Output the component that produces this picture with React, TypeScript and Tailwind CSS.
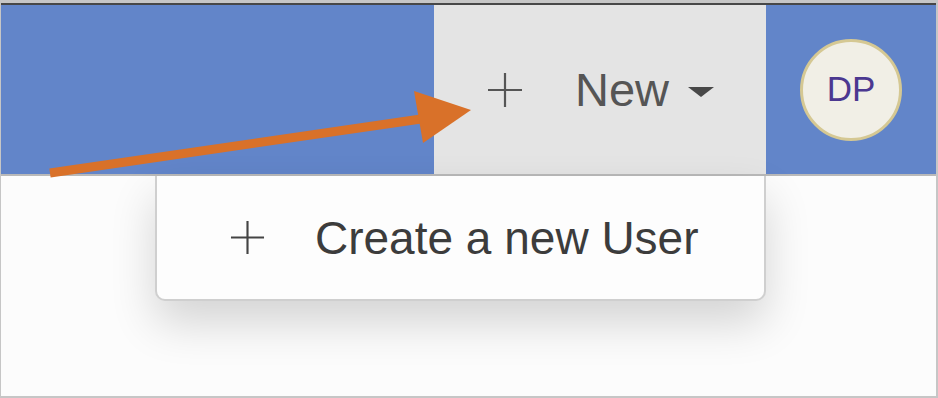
const PlusIcon = ({ size, className }: { size: number; className?: string }) => (
  <svg width={size} height={size} viewBox="0 0 36 36" className={className}>
    <line x1="18" y1="1" x2="18" y2="35" stroke="currentColor" strokeWidth="2.2" />
    <line x1="1" y1="18" x2="35" y2="18" stroke="currentColor" strokeWidth="2.2" />
  </svg>
);

const Pointer = () => (
  <svg
    width="938"
    height="398"
    viewBox="0 0 938 398"
    className="absolute left-0 top-0 pointer-events-none"
  >
    <line x1="49" y1="170" x2="420" y2="116" stroke="#d97129" strokeWidth="9" />
    <polygon points="413,88 470,107 422,140" fill="#d97129" />
  </svg>
);

export default function App() {
  return (
    <div
      className="relative w-[938px] h-[398px] overflow-hidden bg-[#fcfcfc] border-l border-r-2 border-b-2 border-t-[3px] border-[#c6c6c6]"
      style={{ fontFamily: '"Liberation Sans", Arial, sans-serif' }}
    >
      <div className="h-[2px] bg-[#474747]" />
      <header className="flex h-[171px] bg-[#6285c9] border-b-2 border-[#b9b9b9]">
        <div className="flex-1" />
        <button className="w-[332px] bg-[#e4e4e4] flex items-center pl-[53px] text-[#555555]">
          <PlusIcon size={36} />
          <span className="ml-[52px] text-[47px] leading-none">New</span>
          <svg width="28" height="12" viewBox="0 0 28 12" className="ml-[18px] mt-1 text-[#484848]">
            <polygon points="1,1 27,1 14,11" fill="currentColor" />
          </svg>
        </button>
        <div className="w-[170px] flex items-center justify-center">
          <div className="w-[102px] h-[102px] rounded-full bg-[#f1efe6] border-[3px] border-[#d5c893] flex items-center justify-center text-[35px] text-[#4b3890]">
            DP
          </div>
        </div>
      </header>

      <div className="absolute left-[154px] top-[173px] w-[611px] h-[125px] bg-[#fdfdfd] border-2 border-t-0 border-[#cfcfcf] rounded-b-[10px] shadow-[0_22px_45px_rgba(0,0,0,0.16)] flex items-center pl-[73px] text-[#3c3c3c]">
        <PlusIcon size={35} className="text-[#444444]" />
        <span className="ml-[50px] text-[46px] leading-none">Create a new User</span>
      </div>

      <Pointer />
    </div>
  );
}
